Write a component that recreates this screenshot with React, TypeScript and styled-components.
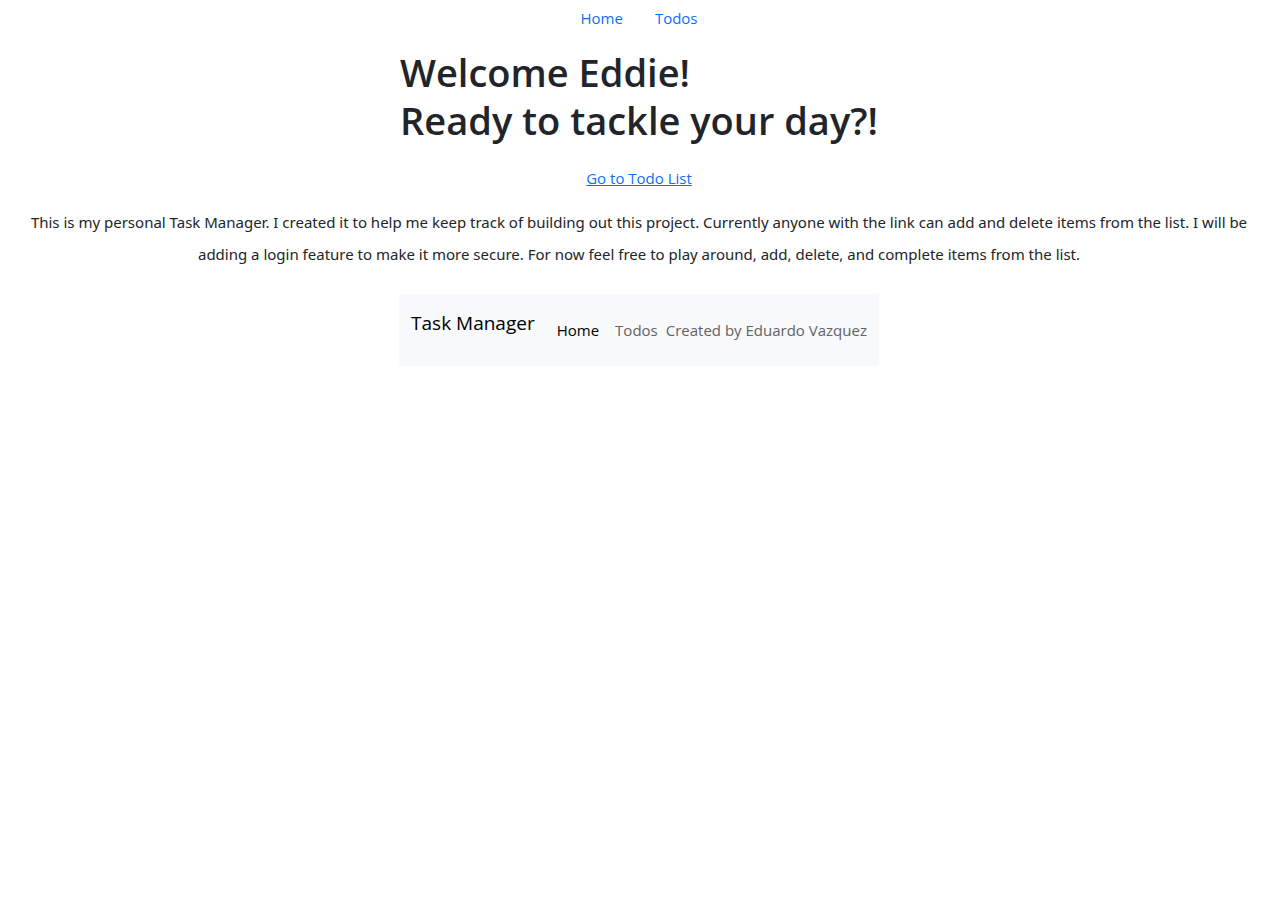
import React from "react";
import styled, { createGlobalStyle } from "styled-components";

const GlobalStyle = createGlobalStyle`
  *, *::before, *::after { box-sizing: border-box; }
  body {
    margin: 0;
    background: #fff;
    color: #212529;
    font-family: "Open Sans", "Noto Sans", sans-serif;
    font-size: 15px;
    line-height: 24px;
  }
`;

const Page = styled.div`
  display: flex;
  flex-direction: column;
  align-items: center;
  padding-left: 6px;
`;

const TopNav = styled.nav`
  display: flex;
  padding: 6px 0 10px;
`;

const TopLink = styled.a`
  padding: 0 16px;
  color: #0d6efd;
  text-decoration: none;
`;

const Title = styled.h1`
  margin: 8px 0 22px;
  font-size: 38px;
  font-weight: 600;
  line-height: 48px;
`;

const TodoLink = styled.a`
  color: #0d6efd;
  text-decoration: underline;
`;

const Intro = styled.p`
  margin: 16px 0 24px;
  padding: 0 20px;
  font-family: "Noto Sans", "Open Sans", sans-serif;
  line-height: 32px;
  text-align: center;
`;

const Footer = styled.footer`
  display: flex;
  align-items: flex-start;
  padding: 14px 12px 24px;
  background: #f8f9fa;
`;

const Brand = styled.a`
  margin-right: 22px;
  color: #000;
  font-size: 19px;
  line-height: 30px;
  text-decoration: none;
`;

const FooterLinks = styled.nav`
  display: flex;
  gap: 16px;
  padding-top: 10px;
`;

const FooterLink = styled.a<{ $active?: boolean }>`
  color: ${({ $active }) => ($active ? "#000" : "#626364")};
  text-decoration: none;
`;

const Credit = styled.span`
  margin-left: 8px;
  padding-top: 10px;
  color: #626364;
`;

export default function App() {
  return (
    <>
      <GlobalStyle />
      <Page>
        <TopNav aria-label="Main">
          <TopLink href="#home">Home</TopLink>
          <TopLink href="#todos">Todos</TopLink>
        </TopNav>
        <Title>
          Welcome Eddie!
          <br />
          Ready to tackle your day?!
        </Title>
        <TodoLink href="#todos">Go to Todo List</TodoLink>
        <Intro>
          This is my personal Task Manager. I created it to help me keep track of
          building out this project. Currently anyone with the link can add and
          delete items from the list. I will be adding a login feature to make it
          more secure. For now feel free to play around, add, delete, and
          complete items from the list.
        </Intro>
        <Footer>
          <Brand href="#home">Task Manager</Brand>
          <FooterLinks aria-label="Footer">
            <FooterLink href="#home" $active>Home</FooterLink>
            <FooterLink href="#todos">Todos</FooterLink>
          </FooterLinks>
          <Credit>Created by Eduardo Vazquez</Credit>
        </Footer>
      </Page>
    </>
  );
}
